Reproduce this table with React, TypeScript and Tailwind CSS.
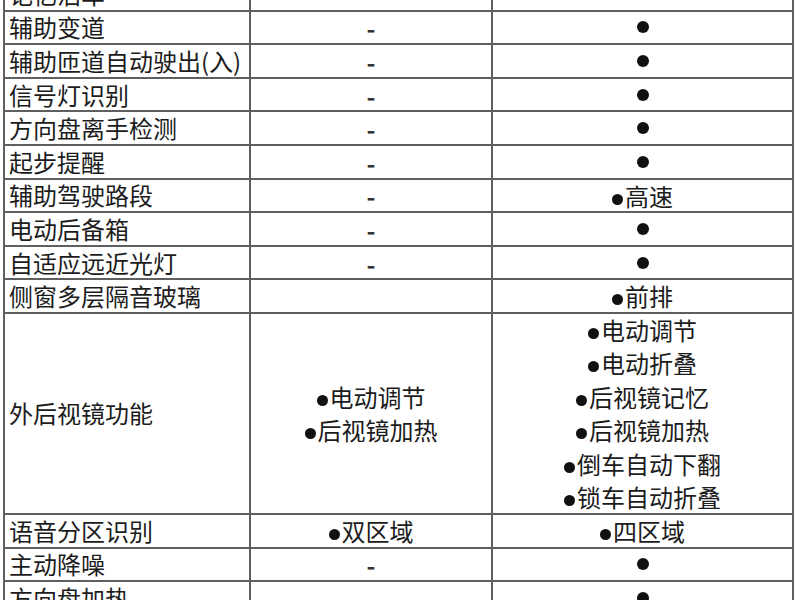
type Cell = '-' | '' | 'dot' | string[]

const rows: [string, Cell, Cell][] = [
  ['记忆泊车', '-', 'dot'],
  ['辅助变道', '-', 'dot'],
  ['辅助匝道自动驶出(入)', '-', 'dot'],
  ['信号灯识别', '-', 'dot'],
  ['方向盘离手检测', '-', 'dot'],
  ['起步提醒', '-', 'dot'],
  ['辅助驾驶路段', '-', ['高速']],
  ['电动后备箱', '-', 'dot'],
  ['自适应远近光灯', '-', 'dot'],
  ['侧窗多层隔音玻璃', '', ['前排']],
  [
    '外后视镜功能',
    ['电动调节', '后视镜加热'],
    ['电动调节', '电动折叠', '后视镜记忆', '后视镜加热', '倒车自动下翻', '锁车自动折叠'],
  ],
  ['语音分区识别', ['双区域'], ['四区域']],
  ['主动降噪', '-', 'dot'],
  ['方向盘加热', '-', 'dot'],
]

const Dot = ({ big }: { big?: boolean }) => (
  <span
    className={
      big
        ? 'inline-block h-[12px] w-[12px] rounded-full bg-[#111]'
        : 'mr-[2px] inline-block h-[11px] w-[11px] rounded-full bg-[#111] align-[1px]'
    }
  />
)

function Value({ v, tall }: { v: Cell; tall?: boolean }) {
  const base = 'flex flex-col items-center justify-center bg-white text-center'
  const h = tall ? 'h-[199px]' : 'h-[31.6px]'
  if (v === 'dot') {
    return (
      <div className={`${base} ${h}`}>
        <Dot big />
      </div>
    )
  }
  if (v === '-' || v === '') {
    return <div className={`${base} ${h} pt-[2px] font-bold text-[#333]`}>{v}</div>
  }
  return (
    <div className={`${base} ${h}`}>
      {v.map((t) => (
        <div key={t} className="leading-[33.5px] whitespace-nowrap">
          <Dot />
          {t}
        </div>
      ))}
    </div>
  )
}

export default function App() {
  return (
    <div
      className="h-[600px] w-[800px] overflow-hidden bg-white text-[24px] text-[#1c1c1c]"
      style={{ fontFamily: '"Noto Sans CJK SC", "Noto Sans", sans-serif' }}
    >
      <div className="ml-[3px] -mt-[24px] grid w-[791px] grid-cols-[244px_240px_299px] gap-[2px] bg-[#5f5f5f] p-[2px]">
        {rows.map(([name, a, b], i) => {
          const tall = Array.isArray(b) && b.length > 2
          return (
            <div key={i} className="contents">
              <div
                className={`flex items-center bg-white pl-[4px] whitespace-nowrap ${
                  tall ? 'h-[199px]' : 'h-[31.6px]'
                }`}
              >
                {name}
              </div>
              <Value v={a} tall={tall} />
              <Value v={b} tall={tall} />
            </div>
          )
        })}
      </div>
    </div>
  )
}
